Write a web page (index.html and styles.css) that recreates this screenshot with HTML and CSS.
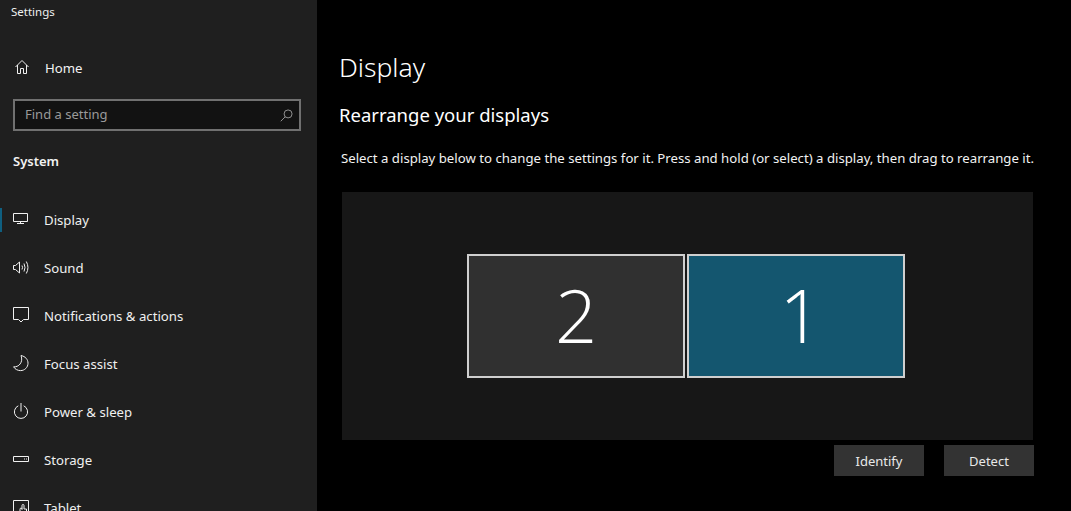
FILE: index.html
```html
<!DOCTYPE html>
<html lang="en">
<head>
<meta charset="utf-8">
<title>Settings</title>
<link rel="stylesheet" href="styles.css">
</head>
<body>
<div class="app">
  <aside class="sidebar">
    <div class="titlebar">Settings</div>
    <a class="home-row">
      <svg class="icon" viewBox="0 0 16 16"><path d="M0.5 7 L7 0.5 L13.5 7 M2.5 5 V13.5 H5.5 V8.5 H8.5 V13.5 H11.5 V5"/></svg>
      <span>Home</span>
    </a>
    <div class="search">
      <span class="search-text">Find a setting</span>
      <svg class="search-icon" viewBox="0 0 14 14"><circle cx="8.7" cy="5.3" r="4.3"/><path d="M5.6 8.4 L0.8 13.2"/></svg>
    </div>
    <div class="group">System</div>
    <nav class="nav">
      <a class="nav-item active">
        <svg class="icon" viewBox="0 0 16 16"><path d="M0.5 1.5 H14.5 V9.5 H0.5 Z M7.5 9.5 V11.5 M4 11.5 H11"/></svg>
        <span>Display</span>
      </a>
      <a class="nav-item">
        <svg class="icon" viewBox="0 0 16 16"><path d="M0.5 5.5 H2.5 L6.5 2 V13 L2.5 9.5 H0.5 Z M9 5.5 Q10 7.5 9 9.5 M11 3.5 Q13 7.5 11 11.5 M13.3 1.5 Q16.6 7.5 13.3 13.5"/></svg>
        <span>Sound</span>
      </a>
      <a class="nav-item">
        <svg class="icon" viewBox="0 0 16 16"><path d="M0.5 -0.5 H15.5 V11.5 H10.5 L8 14 L5.5 11.5 H0.5 Z"/></svg>
        <span>Notifications &amp; actions</span>
      </a>
      <a class="nav-item">
        <svg class="icon" viewBox="0 0 16 16"><path d="M8 -0.5 C12.4 0.5 15 3.4 15 7.2 C15 11.4 11.6 14.6 7.6 14.6 C4.6 14.6 2 13.2 0.6 10.8 C5.6 11.4 10.6 6.4 8 -0.5 Z"/></svg>
        <span>Focus assist</span>
      </a>
      <a class="nav-item">
        <svg class="icon" viewBox="0 0 16 16"><path d="M5.3 1.8 A6.6 6.6 0 1 0 10.7 1.8 M8 -1 V7.5"/></svg>
        <span>Power &amp; sleep</span>
      </a>
      <a class="nav-item">
        <svg class="icon" viewBox="0 0 16 16"><path d="M0.5 4.5 H15.5 V9.5 H0.5 Z M11 7 H12 M13 7 H14"/></svg>
        <span>Storage</span>
      </a>
      <a class="nav-item">
        <svg class="icon" viewBox="0 0 16 16"><path d="M5 13.5 H0.5 V0.5 H15.5 V13.5 M7 16 V9.5 Q7 8 8 8 Q9 8 9 9.5 V5.5 Q9 4.5 10 4.5 Q11 4.5 11 5.5 V9 H13.5 V16"/></svg>
        <span>Tablet</span>
      </a>
    </nav>
  </aside>
  <main class="content">
    <h1 class="page-title">Display</h1>
    <h2 class="section-title">Rearrange your displays</h2>
    <p class="hint">Select a display below to change the settings for it. Press and hold (or select) a display, then drag to rearrange it.</p>
    <div class="canvas">
      <div class="monitor monitor-idle">2</div>
      <div class="monitor monitor-selected"><span class="digit-one">1</span></div>
    </div>
    <div class="actions">
      <button class="btn">Identify</button>
      <button class="btn">Detect</button>
    </div>
  </main>
</div>
</body>
</html>
```
FILE: styles.css
```css
* { box-sizing: border-box; }
html, body { margin: 0; height: 100%; overflow: hidden; background: #000; }
body { font-family: "Noto Sans", "Open Sans", sans-serif; color: #fff; }
.app { display: flex; height: 511px; overflow: hidden; }
.sidebar { width: 317px; flex: none; background: #1f1f1f; height: 511px; overflow: hidden; }
.titlebar { height: 24px; padding-left: 11px; font-size: 11.5px; line-height: 24px; color: #f0f0f0; }
.home-row { display: flex; align-items: center; height: 48px; margin-top: 20px; padding-left: 15px; font-size: 13.2px; gap: 14px; color: #f2f2f2; }
.icon { width: 16px; height: 16px; flex: none; overflow: visible; fill: none; stroke: #f0f0f0; stroke-width: 1; }
.search { display: flex; align-items: center; justify-content: space-between; width: 288px; height: 32px; margin: 7px 0 0 13px; padding: 0 6px 2px 10px; background: #121212; border: 2px solid #707070; }
.search-text { font-size: 13px; color: #9a9a9a; }
.search-icon { width: 13px; height: 13px; margin-top: 2px; fill: none; stroke: #9a9a9a; stroke-width: 1; }
.group { margin: 19px 0 0 13px; height: 22px; line-height: 22px; font-size: 13px; font-weight: 600; color: #f2f2f2; }
.nav { margin-top: 24px; }
.nav-item { position: relative; display: flex; align-items: center; gap: 15px; height: 48px; padding-left: 13px; font-size: 13.2px; color: #f0f0f0; }
.nav-item.active::before { content: ""; position: absolute; left: 0; top: 12px; width: 2px; height: 24px; background: #0f5f80; }
.content { flex: 1; min-width: 0; padding: 43px 0 0 22px; }
.page-title { margin: 0; font-size: 26.5px; line-height: 48px; font-weight: 300; color: #fff; }
.section-title { margin: 0; padding-top: 9px; font-size: 18.5px; line-height: 30px; font-weight: 400; color: #fff; }
.hint { margin: 18px 0 0 2px; font-size: 13.2px; line-height: 20px; color: #f2f2f2; white-space: nowrap; }
.canvas { display: flex; align-items: center; justify-content: center; gap: 2px; width: 691px; height: 248px; margin: 24px 0 0 3px; padding-right: 3px; background: #171717; }
.monitor { display: flex; align-items: center; justify-content: center; width: 218px; height: 124px; padding-bottom: 4px; border: 2px solid #cfcfcf; font-size: 74px; font-weight: 200; font-family: "Open Sans", "Noto Sans", sans-serif; color: #fff; }
.monitor-idle { background: #303030; }
.monitor-selected { background: #14566f; }
.digit-one { padding-left: 9px; }
.actions { display: flex; justify-content: flex-end; gap: 20px; width: 695px; margin-top: 5px; }
.btn { width: 90px; height: 31px; padding: 0; border: 0; background: #333; color: #e8e8e8; font: 400 13px "Noto Sans", "Open Sans", sans-serif; }
```
